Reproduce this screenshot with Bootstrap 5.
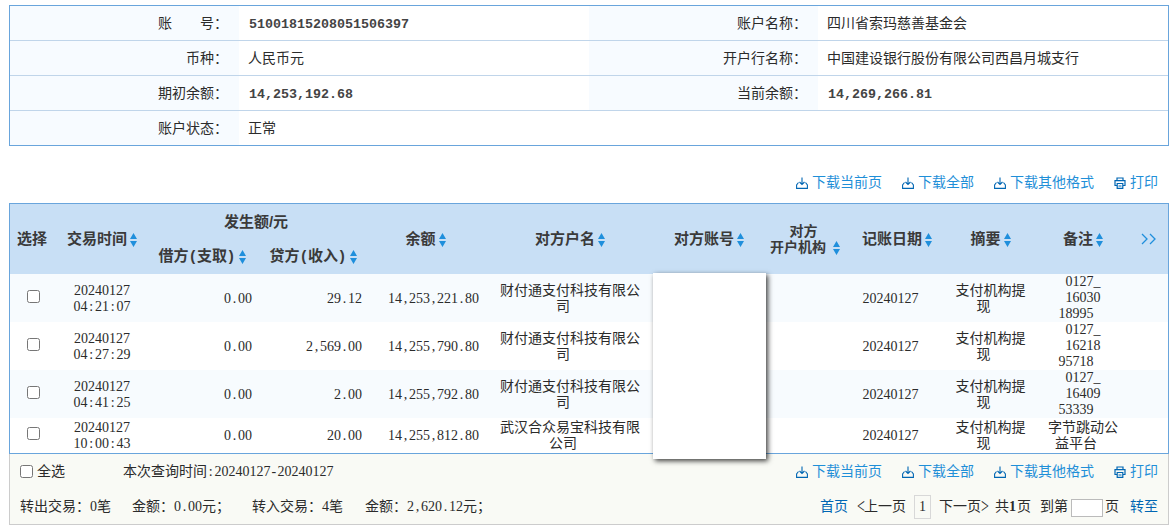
<!DOCTYPE html>
<html lang="zh-CN">
<head>
<meta charset="utf-8">
<title>账户明细查询</title>
<link href="https://cdn.jsdelivr.net/npm/bootstrap@5.3.0/dist/css/bootstrap.min.css" rel="stylesheet">
<style>
body{font:14px/16px "Liberation Serif","Noto Sans CJK SC",serif;color:#2b2b2b;background:#fff;padding:5px 7px 0 9px;overflow:hidden}
.info{display:grid;grid-template-columns:229px 350px 229px 1fr;border:1px solid #69a5dc}
.info>div{height:35px;line-height:36px;border-bottom:1px solid #c0d5ea;white-space:pre}
.info .lb{background:#f7fbff;text-align:right;padding-right:11px}
.info .vl{padding-left:9px}
.info .last{border-bottom:0;height:34px}
.info b{font-family:"Liberation Mono",monospace;font-size:13.33px;color:#444;padding-left:1px}
.pn{padding:0 1.75px}
.pn.dash{padding:0 1.17px}
.tools{line-height:20px;gap:20px}
.tools a{color:#1f8fd8;text-decoration:none;display:flex;align-items:center}
.tools svg{margin-right:4px}
.detail{table-layout:fixed;width:1160px;border:1px solid #69a5dc;border-collapse:separate;border-spacing:0}
.detail th,.detail td{padding:0;vertical-align:middle;text-align:center;white-space:nowrap}
.detail th{background:#c8dff5;height:35px;font-size:15px;color:#3a3a3a;font-weight:600;font-family:"Liberation Sans","Noto Sans CJK SC",sans-serif}
.detail th svg{vertical-align:-3px;margin-left:3px}
.detail tr th.sub{padding-right:8px;padding-bottom:1px}
.detail tr th.org{font-size:14px}
.detail tr th.grp,.detail tr th.bal{padding-right:10px}
.detail td{height:48px;padding-top:2px}
.detail td.memo{padding-top:0}
.detail tr.short td{height:35px;padding-top:0}
.detail tr.tint td{background:#f7fbfe}
.detail td.amt{text-align:right;padding-right:10px}
.detail td.day{padding-right:13px}
.detail .back{margin-right:14px}
input[type=checkbox]{width:13px;height:13px;margin:0;display:inline-block;vertical-align:middle}
td input[type=checkbox]{position:relative;top:-3px;left:1px}
.cover{position:absolute;left:644px;top:70px;width:113px;height:186px;background:#fff;box-shadow:2px 2px 5px rgba(0,0,0,.75)}
.foot{background:#f9faf5;border:1px solid #ccc;border-top:0;height:71px}
.foot .line{height:35px;padding:0 10px}
.pager a{color:#0066b3;text-decoration:none}
.cur{width:17px;height:24px;border:1px solid #d8d8d8;text-align:center;line-height:22px}
.goto{width:32px;height:18px;border:1px solid #bbb;padding:0;background:#fff;position:relative;top:1px}
.ang{display:inline-block;width:7px;transform:scaleY(1.5)}
</style>
</head>
<body>
<svg class="d-none">
<symbol id="dl" viewBox="0 0 12 12"><path d="M2.500 5.500 .6 8v3.400h10.800V8L9.500 5.500M6 .5v7M3.500 5 6 7.500 8.500 5" fill="none" stroke="#0066b3" stroke-width="1.100"/></symbol>
<symbol id="pr" viewBox="0 0 12 12"><path d="M3 3.500V1h6v2.500M3 8.500H1V3.700h10v4.800H9M3.200 6.500h5.600v4.800H3.200zM4.500 9h3" fill="none" stroke="#0066b3" stroke-width="1.200"/></symbol>
<symbol id="so" viewBox="0 0 7 14"><path d="M3.500 0 7 6H0zM0 8h7l-3.500 6z" fill="#1f8fdc"/></symbol>
</svg>

<div class="info">
<div class="lb">账　　号：</div><div class="vl"><b>51001815208051506397</b></div><div class="lb">账户名称：</div><div class="vl">四川省索玛慈善基金会</div>
<div class="lb">币种：</div><div class="vl">人民币元</div><div class="lb">开户行名称：</div><div class="vl">中国建设银行股份有限公司西昌月城支行</div>
<div class="lb">期初余额：</div><div class="vl"><b>14,253,192.68</b></div><div class="lb">当前余额：</div><div class="vl"><b>14,269,266.81</b></div>
<div class="lb last">账户状态：</div><div class="vl last">正常</div><div class="last"></div><div class="last"></div>
</div>

<div class="tools d-flex justify-content-end" style="padding:27px 11px 10px 0">
<a href="#"><svg width="12" height="12"><use href="#dl"/></svg>下载当前页</a><a href="#"><svg width="12" height="12"><use href="#dl"/></svg>下载全部</a><a href="#"><svg width="12" height="12"><use href="#dl"/></svg>下载其他格式</a><a href="#"><svg width="12" height="12"><use href="#pr"/></svg>打印</a>
</div>

<div class="position-relative">
<table class="detail">
<colgroup><col style="width:44px"><col style="width:96px"><col style="width:112px"><col style="width:110px"><col style="width:117px"><col style="width:162px"><col style="width:116px"><col style="width:76px"><col style="width:108px"><col style="width:79px"><col style="width:106px"><col></colgroup>
<thead>
<tr><th rowspan="2">选择</th><th rowspan="2">交易时间<svg width="7" height="14"><use href="#so"/></svg></th><th colspan="2" class="grp">发生额/元</th><th rowspan="2" class="bal">余额<svg width="7" height="14"><use href="#so"/></svg></th><th rowspan="2">对方户名<svg width="7" height="14"><use href="#so"/></svg></th><th rowspan="2">对方账号<svg width="7" height="14"><use href="#so"/></svg></th><th rowspan="2" class="org"><span style="margin-right:3px">对方</span><br>开户机构<svg width="7" height="14" style="margin-left:7px"><use href="#so"/></svg></th><th rowspan="2">记账日期<svg width="7" height="14"><use href="#so"/></svg></th><th rowspan="2">摘要<svg width="7" height="14"><use href="#so"/></svg></th><th rowspan="2">备注<svg width="7" height="14"><use href="#so"/></svg></th><th rowspan="2"><svg width="16" height="12" style="margin:0 6px 2px 0" fill="none" stroke="#1f8fdc" stroke-width="1.3"><path d="M1 1l5 5-5 5M9 1l5 5-5 5"/></svg></th></tr>
<tr><th class="sub">借方<span class="pn">(</span>支取<span class="pn">)</span><svg width="7" height="14"><use href="#so"/></svg></th><th class="sub">贷方<span class="pn">(</span>收入<span class="pn">)</span><svg width="7" height="14"><use href="#so"/></svg></th></tr>
</thead>
<tbody>
<tr class="tint"><td><input type="checkbox"></td><td class="num">20240127<br>04:21:07</td><td class="amt num">0.00</td><td class="amt num">29.12</td><td class="amt num">14,253,221.80</td><td>财付通支付科技有限公<br><span class="back">司</span></td><td></td><td></td><td class="day">20240127</td><td>支付机构提<br><span class="back">现</span></td><td class="memo">0127_<br>16030<br><span class="back">18995</span></td><td></td></tr>
<tr><td><input type="checkbox"></td><td class="num">20240127<br>04:27:29</td><td class="amt num">0.00</td><td class="amt num">2,569.00</td><td class="amt num">14,255,790.80</td><td>财付通支付科技有限公<br><span class="back">司</span></td><td></td><td></td><td class="day">20240127</td><td>支付机构提<br><span class="back">现</span></td><td class="memo">0127_<br>16218<br><span class="back">95718</span></td><td></td></tr>
<tr class="tint"><td><input type="checkbox"></td><td class="num">20240127<br>04:41:25</td><td class="amt num">0.00</td><td class="amt num">2.00</td><td class="amt num">14,255,792.80</td><td>财付通支付科技有限公<br><span class="back">司</span></td><td></td><td></td><td class="day">20240127</td><td>支付机构提<br><span class="back">现</span></td><td class="memo">0127_<br>16409<br><span class="back">53339</span></td><td></td></tr>
<tr class="short"><td><input type="checkbox"></td><td class="num">20240127<br>10:00:43</td><td class="amt num">0.00</td><td class="amt num">20.00</td><td class="amt num">14,255,812.80</td><td>武汉合众易宝科技有限<br><span class="back">公司</span></td><td></td><td></td><td class="day">20240127</td><td>支付机构提<br><span class="back">现</span></td><td>字节跳动公<br><span class="back">益平台</span></td><td></td></tr>
</tbody>
</table>
<div class="cover"></div>
</div>

<div class="foot">
<div class="line d-flex align-items-center">
<input type="checkbox"><span style="margin-left:4px">全选</span><span class="num" style="margin-left:58px">本次查询时间:20240127-20240127</span>
<div class="tools d-flex ms-auto">
<a href="#"><svg width="12" height="12"><use href="#dl"/></svg>下载当前页</a><a href="#"><svg width="12" height="12"><use href="#dl"/></svg>下载全部</a><a href="#"><svg width="12" height="12"><use href="#dl"/></svg>下载其他格式</a><a href="#"><svg width="12" height="12"><use href="#pr"/></svg>打印</a>
</div>
</div>
<div class="line d-flex align-items-center">
<span>转出交易：0笔</span><span class="num" style="margin-left:21px">金额：0.00元；</span><span style="margin-left:22px">转入交易：4笔</span><span class="num" style="margin-left:22px">金额：2,620.12元；</span>
<div class="pager d-flex align-items-center ms-auto">
<a href="#">首页</a><span style="margin-left:9px"><span class="ang">&lt;</span>上一页</span><span class="cur" style="margin:0 8px">1</span><span>下一页<span class="ang">&gt;</span></span><span style="margin-left:7px">共<b style="margin-right:1px">1</b>页</span><span style="margin-left:9px">到第</span><input class="goto" type="text" style="margin:0 2px 0 3px"><span>页</span><a href="#" style="margin-left:11px">转至</a>
</div>
</div>
</div>
<script src="https://cdn.jsdelivr.net/npm/bootstrap@5.3.0/dist/js/bootstrap.bundle.min.js"></script>
<script>
// Give narrow punctuation the same advance as a digit so that figures line up.
document.querySelectorAll('.num').forEach(function (el) {
  el.innerHTML = el.innerHTML.replace(/[.,:]/g, '<span class="pn">$&</span>').replace(/(\d)-(\d)/, '$1<span class="pn dash">-</span>$2');
});
</script>
</body>
</html>
